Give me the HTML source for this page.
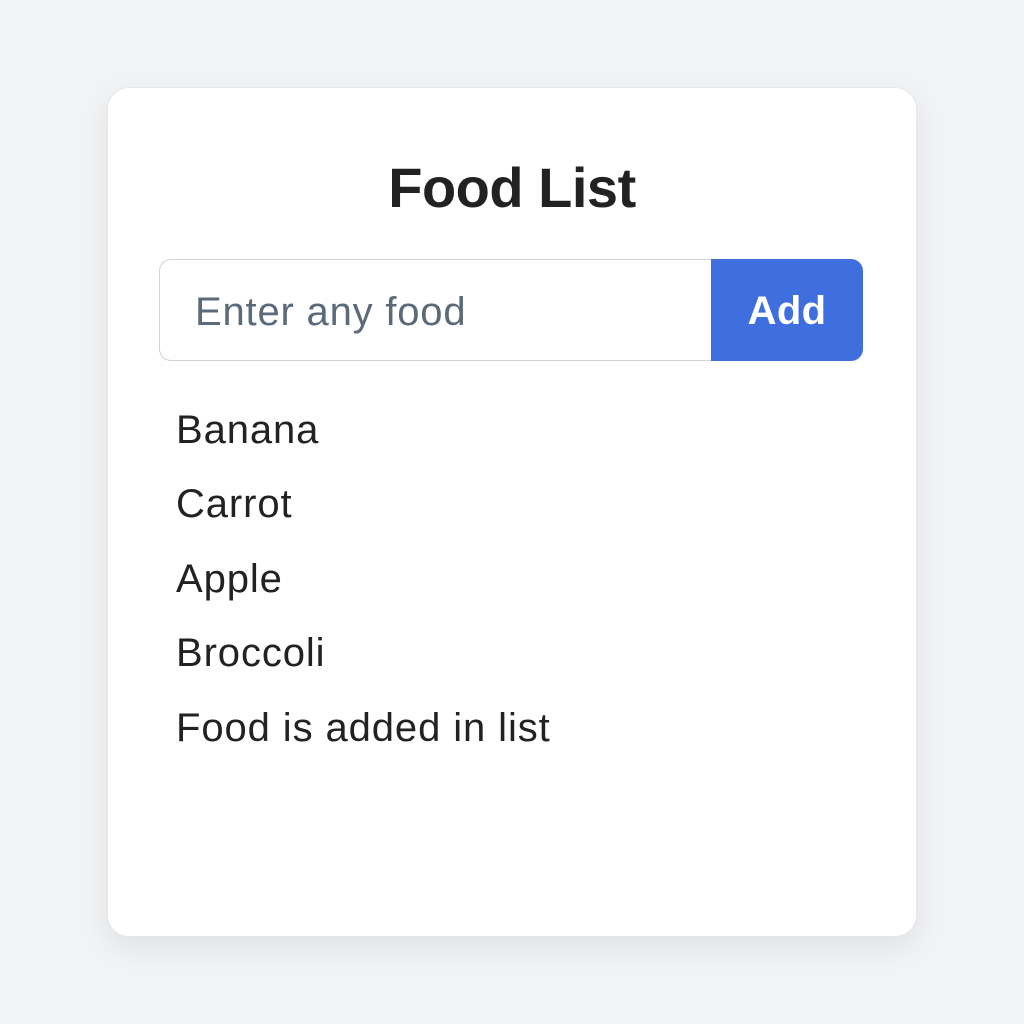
<!DOCTYPE html>
<html><head><style>
html,body{margin:0;padding:0;width:1024px;height:1024px;background:#f2f3f5;font-family:"Liberation Sans",sans-serif;overflow:hidden}
.card{position:absolute;left:107px;top:87px;width:810px;height:850px;background:#fff;border-radius:22px;box-shadow:0 10px 30px rgba(0,0,0,0.08);border:1px solid #e6e7ea;box-sizing:border-box}
h1{position:absolute;top:155px;left:0;width:1024px;text-align:center;margin:0;font-size:56px;font-weight:bold;color:#222;line-height:66px;letter-spacing:-0.5px}
.input{position:absolute;left:159px;top:259px;width:553px;height:102px;border:1px solid #cfd3d8;border-right:none;border-radius:12px 0 0 12px;box-sizing:border-box;font-size:40px;color:#5a6a78;padding-left:35px;line-height:104px;letter-spacing:0.8px}
.btn{position:absolute;left:711px;top:259px;width:152px;height:102px;background:#3f6fde;border-radius:0 12px 12px 0;color:#fff;font-size:40px;text-align:center;line-height:104px;font-weight:bold;letter-spacing:0.3px}
.item{position:absolute;left:176px;font-size:40px;color:#222;line-height:50px;letter-spacing:0.9px}
</style></head><body>
<div class="card"></div>
<h1>Food List</h1>
<div class="input">Enter any food</div>
<div class="btn">Add</div>
<div class="item" style="top:405px">Banana</div>
<div class="item" style="top:479px">Carrot</div>
<div class="item" style="top:554px">Apple</div>
<div class="item" style="top:628px">Broccoli</div>
<div class="item" style="top:703px">Food is added in list</div>
</body></html>
